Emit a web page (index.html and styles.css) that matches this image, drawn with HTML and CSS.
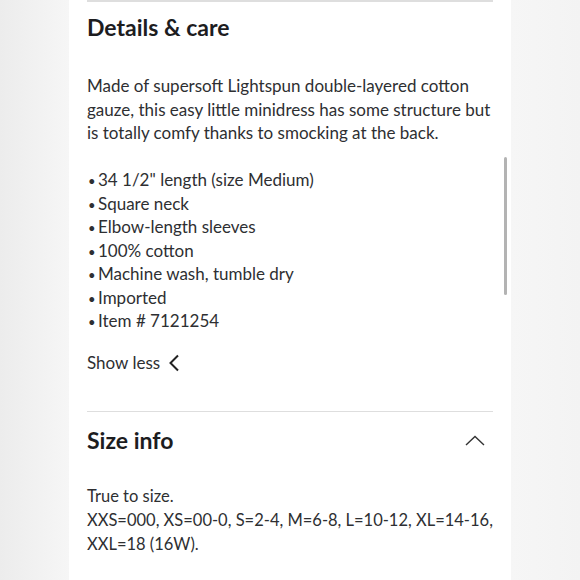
FILE: index.html
```html
<!DOCTYPE html>
<html>
<head>
<meta charset="utf-8">
<link rel="stylesheet" href="styles.css">
</head>
<body>
<div class="panel">
  <div class="rule top"></div>
  <h2 class="title">Details &amp; care</h2>
  <p class="desc">Made of supersoft Lightspun double-layered cotton gauze, this easy little minidress has some structure but is totally comfy thanks to smocking at the back.</p>
  <ul class="bullets">
    <li>34 1/2" length (size Medium)</li>
    <li>Square neck</li>
    <li>Elbow-length sleeves</li>
    <li>100% cotton</li>
    <li>Machine wash, tumble dry</li>
    <li>Imported</li>
    <li>Item # 7121254</li>
  </ul>
  <div class="toggle">Show less
    <svg class="chev-left" width="12" height="18" viewBox="0 0 12 18"><path d="M10 1.5 L2.5 9 L10 16.5" fill="none" stroke="#222" stroke-width="2"/></svg>
  </div>
  <div class="rule mid"></div>
  <div class="sec-head">
    <h2 class="title">Size info</h2>
    <svg class="chev-up" width="20" height="11" viewBox="0 0 20 11"><path d="M1 10 L10 1.5 L19 10" fill="none" stroke="#333" stroke-width="1.4"/></svg>
  </div>
  <p class="size">True to size.<br>XXS=000, XS=00-0, S=2-4, M=6-8, L=10-12, XL=14-16, XXL=18 (16W).</p>
  <div class="scrollbar"></div>
</div>
</body>
</html>
```
FILE: styles.css
```css
html, body {
  margin: 0;
  padding: 0;
}
body {
  width: 580px;
  height: 580px;
  overflow: hidden;
  background: linear-gradient(to right, #ececec 0px, #f6f6f6 69px, #f6f6f6 511px, #f3f3f3 580px);
  font-family: Lato, "Open Sans", sans-serif;
  color: #2e2f32;
}
.panel {
  position: relative;
  margin-left: 69px;
  width: 406px;
  height: 580px;
  padding: 0 18px;
  background: #fff;
}
.rule {
  height: 2px;
  background: #dedede;
}
.title {
  margin: 0;
  font-size: 23px;
  line-height: 30px;
  font-weight: 700;
  color: #1d1d1f;
}
.top + .title {
  padding-top: 10px;
}
.desc {
  margin: 32px 0 0;
  font-size: 17px;
  line-height: 23.5px;
}
.bullets {
  margin: 23.5px 0 0;
  padding: 0;
  list-style: none;
  font-size: 17px;
  line-height: 23.5px;
}
.bullets li {
  height: 23.5px;
  display: flex;
  align-items: baseline;
}
.bullets li::before {
  content: "•";
  width: 10px;
  padding-left: 1px;
  font-size: 13px;
  line-height: 23.5px;
}
.toggle {
  margin-top: 18.5px;
  font-size: 17px;
  line-height: 23.5px;
  display: flex;
  align-items: center;
  gap: 8px;
}
.rule.mid {
  margin-top: 36px;
  height: 1.5px;
}
.sec-head {
  margin-top: 13px;
  display: flex;
  justify-content: space-between;
  align-items: center;
  padding-right: 8px;
}
.size {
  margin: 29px 0 0;
  font-size: 16.5px;
  line-height: 24px;
}
.scrollbar {
  position: absolute;
  right: 4px;
  top: 157px;
  width: 3px;
  height: 138px;
  border-radius: 2px;
  background: #b3b3b3;
}
```
